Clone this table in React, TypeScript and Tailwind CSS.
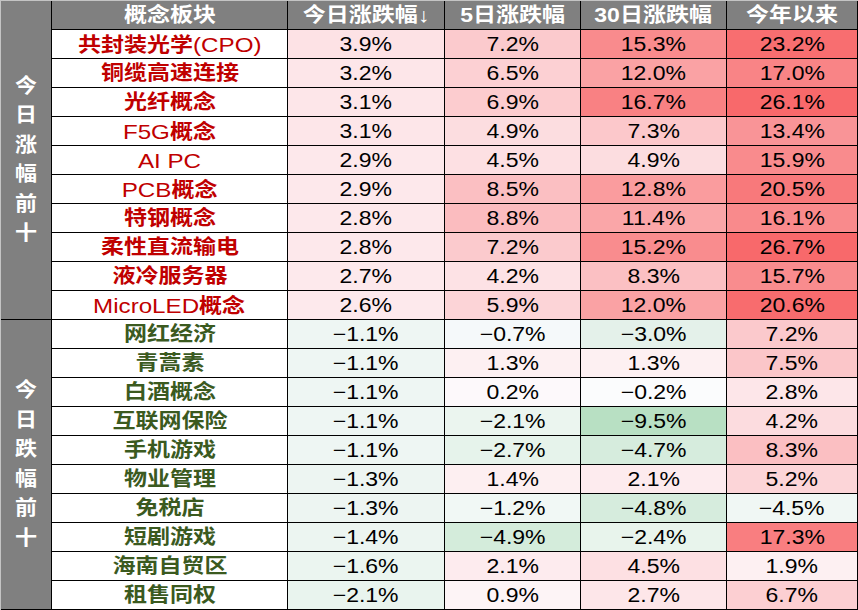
import React from "react";

type Row = { name: string; v: string[]; bg: string[] };

const top: Row[] = [
  { name: "共封装光学(CPO)", v: ["3.9%", "7.2%", "15.3%", "23.2%"], bg: ["bg-[#fde2e5]", "bg-[#fbcacd]", "bg-[#f98b8d]", "bg-[#f86e70]"] },
  { name: "铜缆高速连接", v: ["3.2%", "6.5%", "12.0%", "17.0%"], bg: ["bg-[#fde6e9]", "bg-[#fcd0d3]", "bg-[#faa2a4]", "bg-[#f98486]"] },
  { name: "光纤概念", v: ["3.1%", "6.9%", "16.7%", "26.1%"], bg: ["bg-[#fde6e9]", "bg-[#fccccf]", "bg-[#f98183]", "bg-[#f8696b]"] },
  { name: "F5G概念", v: ["3.1%", "4.9%", "7.3%", "13.4%"], bg: ["bg-[#fde6e9]", "bg-[#fcdde0]", "bg-[#fcc8cb]", "bg-[#f99497]"] },
  { name: "AI PC", v: ["2.9%", "4.5%", "4.9%", "15.9%"], bg: ["bg-[#fde8eb]", "bg-[#fde0e3]", "bg-[#fcdde0]", "bg-[#f98b8d]"] },
  { name: "PCB概念", v: ["2.9%", "8.5%", "12.8%", "20.5%"], bg: ["bg-[#fde8eb]", "bg-[#fbbfc2]", "bg-[#fa9c9e]", "bg-[#f8797b]"] },
  { name: "特钢概念", v: ["2.8%", "8.8%", "11.4%", "16.1%"], bg: ["bg-[#fde8eb]", "bg-[#fbbcbf]", "bg-[#faa6a8]", "bg-[#f98a8c]"] },
  { name: "柔性直流输电", v: ["2.8%", "7.2%", "15.2%", "26.7%"], bg: ["bg-[#fde8eb]", "bg-[#fbcacd]", "bg-[#f98c8e]", "bg-[#f8696b]"] },
  { name: "液冷服务器", v: ["2.7%", "4.2%", "8.3%", "15.7%"], bg: ["bg-[#fde9ec]", "bg-[#fde2e5]", "bg-[#fbc0c3]", "bg-[#f98c8e]"] },
  { name: "MicroLED概念", v: ["2.6%", "5.9%", "12.0%", "20.6%"], bg: ["bg-[#fde9ec]", "bg-[#fcd4d7]", "bg-[#faa2a4]", "bg-[#f86c6e]"] },
];

const bottom: Row[] = [
  { name: "网红经济", v: ["−1.1%", "−0.7%", "−3.0%", "7.2%"], bg: ["bg-[#eef6f3]", "bg-[#f5f9fa]", "bg-[#e4f1ea]", "bg-[#fbc9cc]"] },
  { name: "青蒿素", v: ["−1.1%", "1.3%", "1.3%", "7.5%"], bg: ["bg-[#eef6f3]", "bg-[#fdf0f2]", "bg-[#fdf0f2]", "bg-[#fbc6c9]"] },
  { name: "白酒概念", v: ["−1.1%", "0.2%", "−0.2%", "2.8%"], bg: ["bg-[#eef6f3]", "bg-[#fdf9fb]", "bg-[#fbfcfd]", "bg-[#fde6e9]"] },
  { name: "互联网保险", v: ["−1.1%", "−2.1%", "−9.5%", "4.2%"], bg: ["bg-[#eef6f3]", "bg-[#ebf5ef]", "bg-[#b8e0c3]", "bg-[#fcdcdf]"] },
  { name: "手机游戏", v: ["−1.1%", "−2.7%", "−4.7%", "8.3%"], bg: ["bg-[#eef6f3]", "bg-[#e6f3eb]", "bg-[#d6ecdd]", "bg-[#fbbfc2]"] },
  { name: "物业管理", v: ["−1.3%", "1.4%", "2.1%", "5.2%"], bg: ["bg-[#edf5f2]", "bg-[#fdeff1]", "bg-[#fdebee]", "bg-[#fcd5d8]"] },
  { name: "免税店", v: ["−1.3%", "−1.2%", "−4.8%", "−4.5%"], bg: ["bg-[#edf5f2]", "bg-[#f1f8f5]", "bg-[#d6ecdd]", "bg-[#f0f7f4]"] },
  { name: "短剧游戏", v: ["−1.4%", "−4.9%", "−2.4%", "17.3%"], bg: ["bg-[#ecf5f1]", "bg-[#d4ecdb]", "bg-[#e8f4ec]", "bg-[#f97e80]"] },
  { name: "海南自贸区", v: ["−1.6%", "2.1%", "4.5%", "1.9%"], bg: ["bg-[#ebf5f0]", "bg-[#fdebee]", "bg-[#fde0e3]", "bg-[#fdf0f2]"] },
  { name: "租售同权", v: ["−2.1%", "0.9%", "2.7%", "6.7%"], bg: ["bg-[#e9f4ee]", "bg-[#fdf4f6]", "bg-[#fde6e9]", "bg-[#fccfd2]"] },
];

const headers = ["概念板块", "今日涨跌幅↓", "5日涨跌幅", "30日涨跌幅", "今年以来"];

function Name({ text, color }: { text: string; color: string }) {
  const parts = text.split(/([\u4e00-\u9fff]+)/).filter((p) => p.length > 0);
  return (
    <div className={`flex items-center justify-center bg-white ${color}`}>
      <span className="inline-block scale-x-[1.15] whitespace-nowrap text-[20px] leading-none">
        {parts.map((p, i) =>
          /[\u4e00-\u9fff]/.test(p) ? (
            <span key={i} className="font-bold">{p}</span>
          ) : (
            <span key={i} className="text-[21px] font-normal">{p}</span>
          )
        )}
      </span>
    </div>
  );
}

function Side({ chars, span }: { chars: string[]; span: string }) {
  return (
    <div className={`col-start-1 ${span} flex flex-col items-center justify-center bg-[#808080] text-white`}>
      {chars.map((c, i) => (
        <span key={i} className="inline-block scale-x-[1.1] text-[20px] font-bold leading-[29.5px]">
          {c}
        </span>
      ))}
    </div>
  );
}

function Rows({ rows, color }: { rows: Row[]; color: string }) {
  return (
    <>
      {rows.map((r) => (
        <React.Fragment key={r.name}>
          <Name text={r.name} color={color} />
          {r.v.map((v, i) => (
            <div key={i} className={`flex items-center justify-center ${r.bg[i]}`}>
              <span className="inline-block scale-x-[1.15] text-[20px] leading-none text-black">{v}</span>
            </div>
          ))}
        </React.Fragment>
      ))}
    </>
  );
}

export default function App() {
  return (
    <div
      className="w-[858px] h-[610px] bg-black border-l border-t border-[#c4c4c4] pr-px pb-px"
      style={{ fontFamily: '"Liberation Sans", "Noto Sans CJK SC", sans-serif' }}
    >
      <div className="grid h-full grid-cols-[50px_235px_156px_135px_145px_130px] auto-rows-[28px] gap-px">
        <Side chars={["今", "日", "涨", "幅", "前", "十"]} span="row-span-11" />
        {headers.map((h) => (
          <div key={h} className="flex items-center justify-center bg-[#808080] text-white">
            <span className="inline-block scale-x-[1.15] whitespace-nowrap text-[20px] font-bold leading-none">{h}</span>
          </div>
        ))}
        <Rows rows={top} color="text-[#c00000]" />
        <Side chars={["今", "日", "跌", "幅", "前", "十"]} span="row-span-10" />
        <Rows rows={bottom} color="text-[#3b5a1f]" />
      </div>
    </div>
  );
}
